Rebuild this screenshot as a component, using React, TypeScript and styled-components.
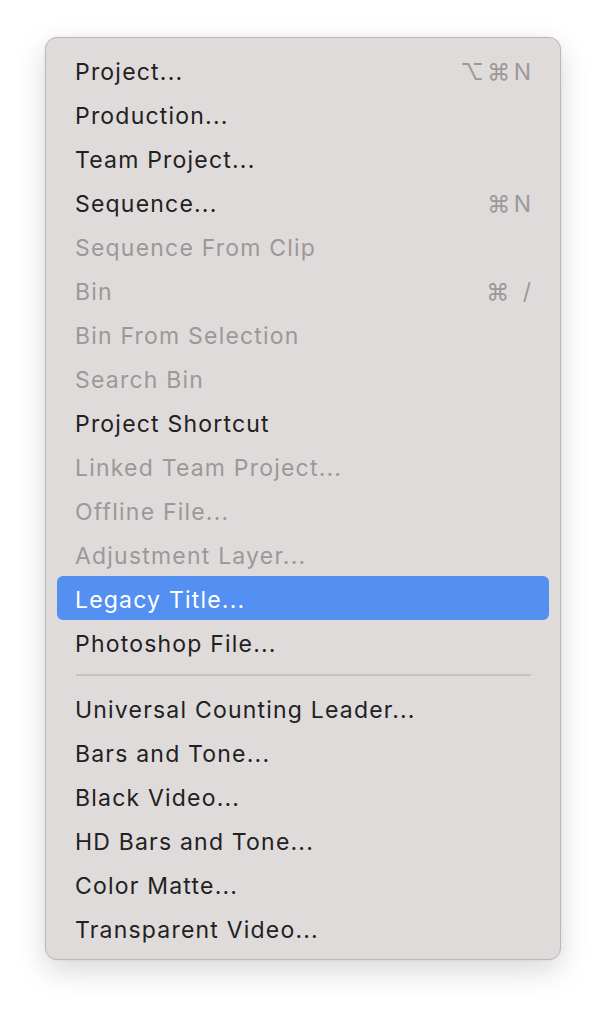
import React from "react";
import styled, { createGlobalStyle } from "styled-components";

const Global = createGlobalStyle`
  html, body { margin: 0; padding: 0; background: #ffffff; }
  body { font-family: Inter, "Noto Sans", "Liberation Sans", sans-serif; -webkit-font-smoothing: antialiased; }
`;

const Page = styled.div`
  width: 606px;
  height: 1014px;
  padding: 37px 0 0 45px;
  box-sizing: border-box;
`;

const Menu = styled.div`
  width: 516px;
  box-sizing: border-box;
  padding: 10px 11px 9px 11px;
  background: #e0dbdb;
  border: 1px solid #bdb8b8;
  border-radius: 12px;
  box-shadow: 0 10px 30px rgba(0, 0, 0, 0.16), 0 0 3px rgba(0, 0, 0, 0.06);
  display: flex;
  flex-direction: column;
`;

const Row = styled.div<{ $disabled?: boolean; $active?: boolean }>`
  height: 44px;
  box-sizing: border-box;
  display: flex;
  align-items: center;
  justify-content: space-between;
  padding: 3px 18px 0 18px;
  border-radius: 6px;
  font-size: 23px;
  letter-spacing: 1.2px;
  color: ${(p) => (p.$active ? "#ffffff" : p.$disabled ? "#9c9898" : "#222121")};
  background: ${(p) => (p.$active ? "#5390f1" : "transparent")};
`;

const Shortcut = styled.span`
  color: #9c9898;
  font-size: 23px;
  letter-spacing: 3.5px;
  margin-right: -3.5px;
`;

const Separator = styled.div`
  height: 22px;
  display: flex;
  align-items: center;
  padding: 0 18px 0 19px;
  &::after {
    content: "";
    flex: 1;
    height: 2px;
    background: #c8c3c3;
  }
`;

type Item = { label: string; shortcut?: string; disabled?: boolean; active?: boolean } | "sep";

const items: Item[] = [
  { label: "Project...", shortcut: "⌥⌘N" },
  { label: "Production..." },
  { label: "Team Project..." },
  { label: "Sequence...", shortcut: "⌘N" },
  { label: "Sequence From Clip", disabled: true },
  { label: "Bin", shortcut: "⌘ /", disabled: true },
  { label: "Bin From Selection", disabled: true },
  { label: "Search Bin", disabled: true },
  { label: "Project Shortcut" },
  { label: "Linked Team Project...", disabled: true },
  { label: "Offline File...", disabled: true },
  { label: "Adjustment Layer...", disabled: true },
  { label: "Legacy Title...", active: true },
  { label: "Photoshop File..." },
  "sep",
  { label: "Universal Counting Leader..." },
  { label: "Bars and Tone..." },
  { label: "Black Video..." },
  { label: "HD Bars and Tone..." },
  { label: "Color Matte..." },
  { label: "Transparent Video..." },
];

export default function App() {
  return (
    <Page>
      <Global />
      <Menu>
        {items.map((it, i) =>
          it === "sep" ? (
            <Separator key={i} />
          ) : (
            <Row key={i} $disabled={it.disabled} $active={it.active}>
              <span>{it.label}</span>
              {it.shortcut && <Shortcut>{it.shortcut}</Shortcut>}
            </Row>
          )
        )}
      </Menu>
    </Page>
  );
}
